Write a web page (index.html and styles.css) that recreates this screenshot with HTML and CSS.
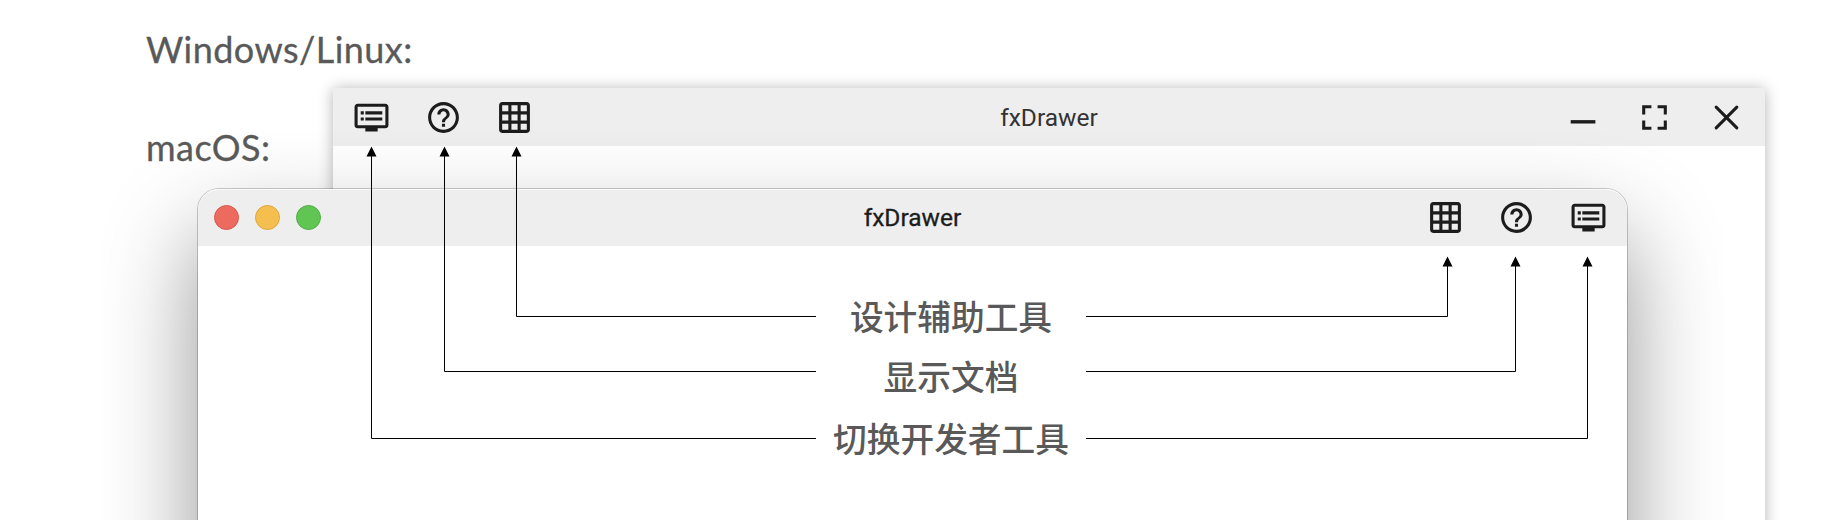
FILE: index.html
```html
<!DOCTYPE html>
<html lang="zh-CN">
<head>
<meta charset="utf-8">
<title>fxDrawer</title>
<link rel="stylesheet" href="styles.css">
</head>
<body>
<svg class="sprite" aria-hidden="true">
  <symbol id="dvr" viewBox="0 0 24 24"><path d="M21 3H3c-1.1 0-2 .9-2 2v12c0 1.100.9 2 2 2h5v2h8v-2h5c1.100 0 1.990-.9 1.990-2L23 5c0-1.100-.9-2-2-2zm0 14H3V5h18v12zm-2-9H8v2h11V8zm0 4H8v2h11v-2zM7 8H5v2h2V8zm0 4H5v2h2v-2z"/></symbol>
  <symbol id="help" viewBox="0 0 24 24"><path d="M11 18h2v-2h-2v2zm1-16C6.480 2 2 6.480 2 12s4.480 10 10 10 10-4.480 10-10S17.520 2 12 2zm0 18c-4.410 0-8-3.590-8-8s3.590-8 8-8 8 3.590 8 8-3.590 8-8 8zm0-14c-2.210 0-4 1.790-4 4h2c0-1.100.9-2 2-2s2 .9 2 2c0 2-3 1.750-3 5h2c0-2.250 3-2.500 3-5 0-2.210-1.790-4-4-4z"/></symbol>
  <symbol id="grid" viewBox="0 0 24 24"><path d="M20 2H4c-1.100 0-2 .9-2 2v16c0 1.100.9 2 2 2h16c1.100 0 2-.9 2-2V4c0-1.100-.9-2-2-2zM8 20H4v-4h4v4zm0-6H4v-4h4v4zm0-6H4V4h4v4zm6 12h-4v-4h4v4zm0-6h-4v-4h4v4zm0-6h-4V4h4v4zm6 12h-4v-4h4v4zm0-6h-4v-4h4v4zm0-6h-4V4h4v4z"/></symbol>
  <symbol id="minimize" viewBox="0 0 24 24"><path d="M3.700 13.700h16v2.200h-16z"/></symbol>
  <symbol id="fullscreen" viewBox="0 0 24 24"><path d="M4 4h6v2H6v4H4zM14 4h6v6h-2V6h-4zM4 14h2v4h4v2H4zM18 14h2v6h-6v-2h4z"/></symbol>
  <symbol id="close" viewBox="0 0 24 24"><path d="M5.300 5.300l13.400 13.400M18.700 5.300L5.300 18.700" fill="none" stroke="currentColor" stroke-width="2" stroke-linecap="round"/></symbol>
</svg>
<main class="stage">
  <div class="platforms">
    <p class="platform platform-win">Windows/Linux:</p>
    <p class="platform platform-mac">macOS:</p>
  </div>

  <section class="window win">
    <header class="bar">
      <div class="tools">
        <svg class="icon"><use href="#dvr"/></svg>
        <svg class="icon"><use href="#help"/></svg>
        <svg class="icon"><use href="#grid"/></svg>
      </div>
      <h1 class="title">fxDrawer</h1>
      <div class="tools tools-end">
        <svg class="icon"><use href="#minimize"/></svg>
        <svg class="icon"><use href="#fullscreen"/></svg>
        <svg class="icon"><use href="#close"/></svg>
      </div>
    </header>
  </section>

  <div class="mac-area">
  <section class="window mac">
    <header class="bar">
      <div class="lights">
        <span class="light red"></span>
        <span class="light yellow"></span>
        <span class="light green"></span>
      </div>
      <h1 class="title">fxDrawer</h1>
      <div class="tools tools-end">
        <svg class="icon"><use href="#grid"/></svg>
        <svg class="icon"><use href="#help"/></svg>
        <svg class="icon"><use href="#dvr"/></svg>
      </div>
    </header>
    <div class="notes">
      <p class="note">设计辅助工具</p>
      <p class="note">显示文档</p>
      <p class="note">切换开发者工具</p>
    </div>
  </section>
  </div>

  <svg class="arrows" viewBox="0 0 1846 520">
    <g fill="none" stroke="#000" stroke-width="1">
      <path d="M816 316.500H516.500V155"/>
      <path d="M816 371.500H444.500V155"/>
      <path d="M816 438.500H371.500V155"/>
      <path d="M1086 316.500H1447.500V265"/>
      <path d="M1086 371.500H1515.500V265"/>
      <path d="M1086 438.500H1587.500V265"/>
    </g>
    <path d="M371.500 146.500l5 10h-10zM444.500 146.500l5 10h-10zM516.500 146.500l5 10h-10zM1447.500 256.500l5 10h-10zM1515.500 256.500l5 10h-10zM1587.500 256.500l5 10h-10z"/>
  </svg>
</main>
</body>
</html>
```
FILE: styles.css
```css
* { box-sizing: border-box; }
body { margin: 0; background: #fff; }
p, h1 { margin: 0; }
.sprite { display: none; }

.stage {
  position: relative;
  width: 1846px;
  height: 520px;
  overflow: hidden;
}

.platforms {
  position: relative;
  z-index: 2;
  display: flex;
  flex-direction: column;
  gap: 54px;
  width: 300px;
  padding: 27px 0 0 146px;
}
.platform {
  font: 400 36px/44px Lato, sans-serif;
  letter-spacing: .45px;
  color: #595959;
  -webkit-text-stroke: .3px #595959;
  white-space: nowrap;
}

.window {
  position: absolute;
  background: #fff;
}
.win {
  left: 333px;
  top: 88px;
  width: 1432px;
  height: 500px;
  box-shadow: 0 1px 14px rgba(0, 0, 0, .3);
}
/* The large shadow ends at the edges of this area */
.mac-area {
  position: absolute;
  left: 100px;
  top: 110px;
  width: 1625px;
  height: 410px;
  overflow: hidden;
}
.mac {
  left: 98px;
  top: 79px;
  width: 1429px;
  height: 800px;
  border-radius: 21px;
  box-shadow: 0 0 0 1px rgba(0, 0, 0, .2), 0 45px 95px rgba(0, 0, 0, .42);
}

.bar {
  display: grid;
  grid-template-columns: 1fr auto 1fr;
  align-items: center;
  height: 58px;
  padding: 0 20px;
  background: #eee;
  color: #1c1c1c;
}
.mac .bar {
  height: 57px;
  border-radius: 21px 21px 0 0;
  box-shadow: inset 0 1px #fafafa;
}
.tools {
  display: flex;
  gap: 34.700px;
}
.tools-end { justify-content: flex-end; }
.icon {
  display: block;
  width: 37px;
  height: 37px;
  fill: currentColor;
}
.title {
  font: 400 24.500px/30px Roboto, sans-serif;
  color: #333;
}
.win .title { padding-top: 1px; }
.mac .title { color: #1c1c1c; -webkit-text-stroke: .3px #1c1c1c; }

.lights {
  display: flex;
  gap: 16px;
  margin-left: -4px;
}
.light {
  width: 25px;
  height: 25px;
  border-radius: 50%;
}
.red { background: #ed6a5e; border: 1px solid #d8574c; }
.yellow { background: #f5bf4f; border: 1px solid #dca63b; }
.green { background: #61c554; border: 1px solid #4fae42; }

.notes {
  display: flex;
  flex-direction: column;
  align-items: center;
  padding: 45px 0 0 77px;
}
.note {
  font: 500 33.700px/50px "Noto Sans CJK SC", sans-serif;
  color: #595959;
}
.note:nth-child(2) { margin-top: 10px; }
.note:nth-child(3) { margin-top: 12px; }

.arrows {
  position: absolute;
  inset: 0;
  width: 1846px;
  height: 520px;
  z-index: 3;
}
```
